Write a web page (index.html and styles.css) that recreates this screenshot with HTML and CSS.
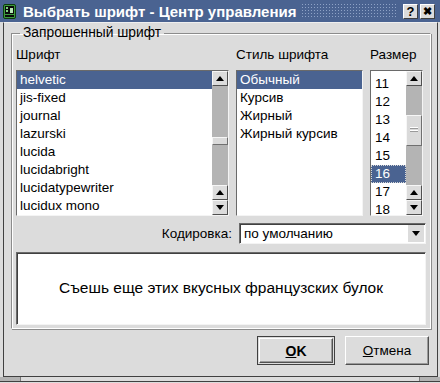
FILE: index.html
```html
<!DOCTYPE html>
<html lang="ru">
<head>
<meta charset="utf-8">
<title>Выбрать шрифт</title>
<link rel="stylesheet" href="styles.css">
</head>
<body>
<div class="window">
  <div class="titlebar">
    <svg class="appicon" width="13" height="15" viewBox="0 0 13 15">
      <rect x="0.5" y="0.5" width="12" height="14" rx="1.5" fill="#3c9a3c" stroke="#0c3d0c"/>
      <rect x="2" y="2" width="9" height="8" fill="#0a0a0a"/>
      <rect x="3" y="3" width="2" height="2" fill="#7fd67f"/>
      <rect x="3" y="6" width="2" height="2" fill="#7fd67f"/>
      <rect x="7" y="4" width="3" height="5" fill="#b8e8b8"/>
      <rect x="2" y="11" width="9" height="2" fill="#0a0a0a"/>
    </svg>
    <span class="title">Выбрать шрифт - Центр управления</span>
    <span class="dots"></span>
    <span class="tbtn">?</span>
    <span class="tbtn close">✖</span>
  </div>
  <div class="frame">
    <fieldset class="group">
      <legend>Запрошенный шрифт</legend>
      <div class="cols">
        <div class="colhead">Шрифт</div>
        <div class="colhead">Стиль шрифта</div>
        <div class="colhead">Размер</div>

        <div class="listbox">
          <ul class="items">
            <li class="sel">helvetic</li>
            <li>jis-fixed</li>
            <li>journal</li>
            <li>lazurski</li>
            <li>lucida</li>
            <li>lucidabright</li>
            <li>lucidatypewriter</li>
            <li>lucidux mono</li>
          </ul>
          <div class="sbar">
            <div class="sbtn"><i class="up"></i></div>
            <div class="trough"><div class="thumb" style="margin-top:51px;height:8px"></div></div>
            <div class="sbtn"><i class="up"></i></div>
            <div class="sbtn"><i class="down"></i></div>
          </div>
        </div>

        <div class="listbox">
          <ul class="items">
            <li class="sel">Обычный</li>
            <li>Курсив</li>
            <li>Жирный</li>
            <li>Жирный курсив</li>
          </ul>
        </div>

        <div class="listbox">
          <ul class="items sizes">
            <li>11</li>
            <li>12</li>
            <li>13</li>
            <li>14</li>
            <li>15</li>
            <li class="sel focus">16</li>
            <li>17</li>
            <li>18</li>
          </ul>
          <div class="sbar">
            <div class="sbtn"><i class="up"></i></div>
            <div class="trough"><div class="thumb grip" style="margin-top:29px;height:31px"></div></div>
            <div class="sbtn"><i class="up"></i></div>
            <div class="sbtn"><i class="down"></i></div>
          </div>
        </div>
      </div>

      <div class="enc">
        <span class="enc-label">Кодировка:</span>
        <div class="combo">
          <span class="combo-text">по умолчанию</span>
          <span class="combo-btn"><i class="down"></i></span>
        </div>
      </div>

      <div class="preview">Съешь еще этих вкусных французских булок</div>
    </fieldset>

    <div class="buttons">
      <div class="default-ring"><button class="btn ok"><u>O</u>K</button></div>
      <button class="btn cancel"><u>О</u>тмена</button>
    </div>
  </div>
  <div class="edge">
    <span class="grip-l"></span>
    <span class="edge-fill"></span>
    <span class="grip-r"></span>
  </div>
</div>
</body>
</html>
```

FILE: styles.css
```css
html, body {
  margin: 0;
  padding: 0;
  background: #dcdcdc;
}

body {
  font-family: "Liberation Sans", Arial, sans-serif;
  font-size: 13.5px;
  color: #000;
}

.window {
  width: 440px;
  height: 383px;
  box-sizing: border-box;
  background: #dcdcdc;
  display: flex;
  flex-direction: column;
  overflow: hidden;
}

/* ---------- title bar ---------- */
.titlebar {
  height: 22px;
  flex: none;
  background: #4a6391;
  display: flex;
  align-items: center;
  padding: 0 5px 0 3px;
  box-sizing: border-box;
}

.appicon {
  flex: none;
  margin-right: 7px;
  margin-top: 1px;
}

.title {
  color: #fff;
  font-weight: bold;
  font-size: 15px;
  white-space: nowrap;
}

.dots {
  flex: 1;
  align-self: stretch;
  margin: 3px 4px 3px 4px;
  background-image: radial-gradient(circle, #8ea2c6 0.7px, transparent 0.9px);
  background-size: 3px 3px;
}

.tbtn {
  flex: none;
  width: 15px;
  height: 15px;
  box-sizing: border-box;
  background: #dcdcdc;
  border: 1px solid;
  border-color: #ffffff #404040 #404040 #ffffff;
  display: flex;
  align-items: center;
  justify-content: center;
  font-weight: bold;
  font-size: 13px;
  line-height: 1;
  margin-left: 2px;
}

.tbtn.close {
  font-size: 11px;
}

/* ---------- frame ---------- */
.frame {
  flex: none;
  height: 355px;
  box-sizing: border-box;
  margin: 0 2px 0 3px;
  border: 1px solid #404040;
  border-top: 1px solid #efefef;
  padding: 2px 6px 0 7px;
  display: flex;
  flex-direction: column;
}

.edge {
  flex: none;
  height: 5px;
  display: flex;
  border-bottom: 1px solid #404040;
  box-sizing: border-box;
}

.grip-l {
  width: 20px;
  background: #b2b2b2;
  border-right: 1px solid #7a7a7a;
}

.edge-fill {
  flex: 1;
}

.grip-r {
  width: 20px;
  background: #b2b2b2;
  border-left: 1px solid #7a7a7a;
}

/* ---------- group box ---------- */
.group {
  margin: 0;
  padding: 6px 4px 3px 4px;
  border-style: solid;
  border-width: 1px;
  border-color: #8c8c8c #ffffff #ffffff #8c8c8c;
  box-shadow: inset 1px 1px 0 #ffffff, 1px 1px 0 #8c8c8c;
  min-width: 0;
}

.group legend {
  padding: 0 3px;
  margin-left: 4px;
  line-height: 16px;
  font-size: 13.8px;
}

.cols {
  display: grid;
  grid-template-columns: 213px 127px 53px;
  column-gap: 7px;
  row-gap: 7px;
}

.colhead {
  line-height: 16px;
  white-space: nowrap;
}

/* ---------- list boxes ---------- */
.listbox {
  height: 146px;
  box-sizing: border-box;
  background: #fff;
  border: 1px solid;
  border-color: #6a6a6a #f4f4f4 #f4f4f4 #6a6a6a;
  display: flex;
  overflow: hidden;
}

.items {
  list-style: none;
  margin: 0;
  padding: 0;
  flex: 1;
  min-width: 0;
}

.items li {
  height: 18px;
  line-height: 18px;
  padding-left: 3px;
  white-space: nowrap;
  box-sizing: border-box;
}

.items li.sel {
  background: #4a6391;
  color: #fff;
}

.items li.focus {
  outline: 1px dotted #d8d8d8;
  outline-offset: -1px;
}

.sizes {
  padding-top: 4px;
}

.sizes li {
  padding-left: 4px;
}

/* ---------- scrollbar ---------- */
.sbar {
  flex: none;
  width: 16px;
  display: flex;
  flex-direction: column;
  background: #b4b4b4;
}

.sbtn {
  flex: none;
  height: 15px;
  box-sizing: border-box;
  background: #dcdcdc;
  border: 1px solid;
  border-color: #f6f6f6 #505050 #505050 #f6f6f6;
  display: flex;
  align-items: center;
  justify-content: center;
}

.trough {
  flex: 1;
  background: #b4b4b4;
  display: flex;
  flex-direction: column;
}

.thumb {
  flex: none;
  box-sizing: border-box;
  background: #dadada;
  border: 1px solid;
  border-color: #f6f6f6 #707070 #707070 #f6f6f6;
}

.thumb.grip {
  background-image: linear-gradient(#dadada 11px, #ffffff 11px, #ffffff 12px, #9a9a9a 12px, #9a9a9a 13px, #dadada 13px, #dadada 14px, #ffffff 14px, #ffffff 15px, #9a9a9a 15px, #9a9a9a 16px, #dadada 16px);
  background-size: 8px 100%;
  background-repeat: no-repeat;
  background-position: center;
}

i.up {
  width: 0;
  height: 0;
  border-left: 4px solid transparent;
  border-right: 4px solid transparent;
  border-bottom: 5px solid #000;
}

i.down {
  width: 0;
  height: 0;
  border-left: 4px solid transparent;
  border-right: 4px solid transparent;
  border-top: 5px solid #000;
}

/* ---------- encoding ---------- */
.enc {
  margin-top: 7px;
  display: flex;
  justify-content: flex-end;
  align-items: center;
  height: 21px;
}

.enc-label {
  margin-right: 7px;
}

.combo {
  width: 187px;
  height: 21px;
  box-sizing: border-box;
  background: #fff;
  border: 1px solid;
  border-color: #6a6a6a #f4f4f4 #f4f4f4 #6a6a6a;
  box-shadow: inset 1px 1px 0 #404040;
  display: flex;
  align-items: center;
}

.combo-text {
  flex: 1;
  padding-left: 4px;
}

.combo-btn {
  width: 16px;
  align-self: stretch;
  margin: 1px 1px 1px 0;
  background: #dcdcdc;
  display: flex;
  align-items: center;
  justify-content: center;
}

/* ---------- preview ---------- */
.preview {
  margin-top: 8px;
  height: 73px;
  box-sizing: border-box;
  background: #fff;
  border: 1px solid;
  border-color: #6a6a6a #f4f4f4 #f4f4f4 #6a6a6a;
  box-shadow: inset 1px 1px 0 #404040;
  display: flex;
  align-items: center;
  justify-content: center;
  font-size: 15.5px;
  padding-bottom: 2px;
}

/* ---------- buttons ---------- */
.buttons {
  margin-top: 7px;
  display: flex;
  justify-content: flex-end;
  gap: 10px;
  padding-right: 2px;
}

.default-ring {
  width: 78px;
  height: 29px;
  box-sizing: border-box;
  border: 1px solid #404040;
  padding: 1px;
  display: flex;
}

.btn {
  font-family: "Liberation Sans", Arial, sans-serif;
  font-size: 13.5px;
  color: #000;
  background: #dcdcdc;
  border: 1px solid;
  border-color: #ffffff #505050 #505050 #ffffff;
  box-shadow: inset -1px -1px 0 #9a9a9a;
  margin: 0;
  padding: 0;
  display: flex;
  align-items: center;
  justify-content: center;
}

.btn.ok {
  flex: 1;
  font-weight: bold;
  font-size: 14px;
}

.btn.cancel {
  width: 84px;
  height: 29px;
  box-sizing: border-box;
}
```
